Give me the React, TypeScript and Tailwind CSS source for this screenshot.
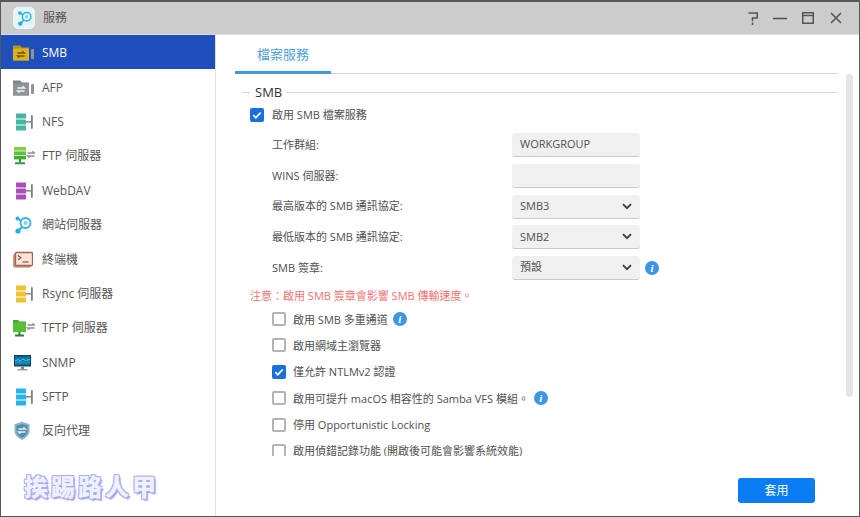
import { ReactNode } from "react";

const Connector = ({ x = 24 }: { x?: number }) => (
  <g>
    <rect x={x - 5} y="9" width="5" height="1.6" fill="#8a8f92" />
    <rect x={x} y="3" width="1.8" height="14" rx="0.9" fill="#7d8285" />
  </g>
);

const Stack = ({ color }: { color: string }) => (
  <svg width="22" height="20" viewBox="0 0 22 20">
    <rect x="3" y="1.5" width="10" height="5" rx="0.6" fill={color} />
    <rect x="3" y="7.5" width="10" height="5" rx="0.6" fill={color} />
    <rect x="3" y="13.5" width="10" height="5" rx="0.6" fill={color} />
    <Connector x={18} />
  </svg>
);

const Arrows = ({ x, y, c }: { x: number; y: number; c: string }) => (
  <g stroke={c} strokeWidth="1.3" fill="none">
    <path d={`M${x} ${y}h7l-2-1.8`} />
    <path d={`M${x + 7} ${y + 3}h-7l2 1.8`} />
  </g>
);

const FolderIcon = ({ body, tab, arrow }: { body: string; tab: string; arrow: string }) => (
  <svg width="22" height="20" viewBox="0 0 22 20">
    <path d="M0 2.5h7l2 2h7v13H0z" fill={tab} />
    <rect x="0" y="5.5" width="16" height="12" fill={body} />
    <Arrows x={4.5} y={10} c={arrow} />
    <rect x="18" y="6" width="3" height="10" rx="1" fill="#8f9496" />
  </svg>
);

const NetIcon = ({ size = 20 }: { size?: number }) => (
  <svg width={size} height={size} viewBox="0 0 20 20" fill="none">
    <circle cx="12.5" cy="8" r="5" stroke="#2bb3e6" strokeWidth="1.8" />
    <circle cx="12.5" cy="8" r="2" fill="#7fd3ef" />
    <circle cx="4.5" cy="3.5" r="2" fill="#25ade2" />
    <circle cx="5" cy="16" r="2.6" fill="#25ade2" />
    <path d="M5.5 4.5l3 1.2M6.5 14.5l3-2.8" stroke="#25ade2" strokeWidth="1.8" />
  </svg>
);

const TerminalIcon = () => (
  <svg width="20" height="20" viewBox="0 0 20 20">
    <rect x="0.8" y="4" width="17" height="13" rx="1" fill="#d7a692" stroke="#b0705a" />
    <rect x="2.5" y="2.5" width="17" height="13" rx="1" fill="#fbe4d8" stroke="#a9604a" strokeWidth="1.3" />
    <path d="M5 5.5l3 2.2-3 2.2" stroke="#8c4c39" fill="none" strokeWidth="1.1" />
    <path d="M9.5 12h6" stroke="#8c4c39" strokeWidth="1.2" />
  </svg>
);

const FtpIcon = () => (
  <svg width="22" height="20" viewBox="0 0 22 20">
    <rect x="1" y="1" width="12" height="3.6" fill="#7ed04b" />
    <rect x="1" y="5.4" width="12" height="3.6" fill="#5cc13a" />
    <rect x="1" y="9.8" width="12" height="3.6" fill="#3eaf2e" />
    <path d="M7 13v3M2 17.2h10" stroke="#2b9a3a" strokeWidth="2" />
    <Arrows x={14.5} y={7} c="#8d9193" />
  </svg>
);

const TftpIcon = () => (
  <svg width="22" height="20" viewBox="0 0 22 20">
    <path d="M0 2h5l1.5 1.5H13V14H0z" fill="#47a72f" />
    <rect x="0" y="4.5" width="13" height="9.5" fill="#59bf35" />
    <path d="M6.5 14v2.5M2 17.5h9" stroke="#26862f" strokeWidth="2" />
    <Arrows x={14.5} y={7} c="#8d9193" />
  </svg>
);

const SnmpIcon = () => (
  <svg width="20" height="20" viewBox="0 0 20 20">
    <rect x="1" y="2" width="17" height="11.5" fill="#15435f" />
    <rect x="2" y="3.5" width="15" height="8.5" fill="#0d76a8" />
    <path d="M2 8l3-1.5 2 1.5 3-2 2.5 1.5L17 6.5" stroke="#5fd0ea" fill="none" strokeWidth="0.9" />
    <path d="M2 10l3-1 2 1 3-1 3 1 4-1" stroke="#3ab2d8" fill="none" strokeWidth="0.7" />
    <rect x="8" y="13.5" width="3" height="2.5" fill="#7b8286" />
    <rect x="4.5" y="16" width="10" height="1.5" fill="#9ba1a4" />
  </svg>
);

const ShieldIcon = () => (
  <svg width="20" height="20" viewBox="0 0 20 20">
    <path d="M9 0.8l7.5 2.4V10c0 4-3.5 7-7.5 9C5 17 1.5 14 1.5 10V3.2z" fill="#8fb3c4" />
    <path d="M9 3l5.5 1.7V10c0 3-2.6 5.2-5.5 6.7C6.1 15.2 3.5 13 3.5 10V4.7z" fill="#4f8eae" />
    <Arrows x={5.5} y={8} c="#e8f2f6" />
  </svg>
);

const menu: { label: string; icon: ReactNode }[] = [
  { label: "SMB", icon: <FolderIcon body="#d9b31c" tab="#b8951a" arrow="#7a4f10" /> },
  { label: "AFP", icon: <FolderIcon body="#8d9599" tab="#7c8488" arrow="#f1f3f4" /> },
  { label: "NFS", icon: <Stack color="#45b5a4" /> },
  { label: "FTP 伺服器", icon: <FtpIcon /> },
  { label: "WebDAV", icon: <Stack color="#a94fb8" /> },
  { label: "網站伺服器", icon: <NetIcon /> },
  { label: "終端機", icon: <TerminalIcon /> },
  { label: "Rsync 伺服器", icon: <Stack color="#f0c232" /> },
  { label: "TFTP 伺服器", icon: <TftpIcon /> },
  { label: "SNMP", icon: <SnmpIcon /> },
  { label: "SFTP", icon: <Stack color="#25b4ec" /> },
  { label: "反向代理", icon: <ShieldIcon /> },
];

const InfoIcon = () => (
  <span className="flex h-[14px] w-[14px] items-center justify-center rounded-full bg-[#3d96e3] font-['Liberation_Serif',serif] text-[11px] font-bold italic leading-none text-white">
    i
  </span>
);

const Check = ({ on }: { on?: boolean }) =>
  on ? (
    <span className="flex h-[14px] w-[14px] shrink-0 items-center justify-center rounded-[2px] bg-[#1a6fe0]">
      <svg width="10" height="10" viewBox="0 0 10 10" fill="none">
        <path d="M1.3 5.2l2.5 2.5 4.9-5.2" stroke="#fff" strokeWidth="1.7" />
      </svg>
    </span>
  ) : (
    <span className="h-[14px] w-[14px] shrink-0 rounded-[2px] border-2 border-[#b4b4b4] bg-white" />
  );

const Chevron = () => (
  <svg width="10" height="7" viewBox="0 0 10 7" fill="none">
    <path d="M1 1.2l4 4 4-4" stroke="#3c3c3c" strokeWidth="1.8" />
  </svg>
);

const Field = ({ label, value, select, info }: { label: string; value?: string; select?: boolean; info?: boolean }) => (
  <div className="flex h-[24px] items-center">
    <span className="w-[262px] pl-[22px]">{label}</span>
    <div className="flex h-[24px] w-[128px] items-center justify-between rounded-[3px] border-b border-[#c9c9c9] bg-[#f0f0f0] pl-[8px] pr-[8px]">
      <span>{value}</span>
      {select && <Chevron />}
    </div>
    {info && (
      <span className="ml-[5px]">
        <InfoIcon />
      </span>
    )}
  </div>
);

const Option = ({ label, on, info }: { label: string; on?: boolean; info?: boolean }) => (
  <div className="flex h-[14px] items-center pl-[22px]">
    <Check on={on} />
    <span className="ml-[7px] whitespace-nowrap leading-[11px]">{label}</span>
    {info && (
      <span className="ml-[5px]">
        <InfoIcon />
      </span>
    )}
  </div>
);

export default function App() {
  return (
    <div className="relative flex h-[517px] w-[860px] flex-col overflow-hidden border-x border-b border-t-2 border-[#55585a] bg-white font-['Open_Sans','Noto_Sans_CJK_TC',sans-serif] text-[11px] text-[#505050]">
      <div className="flex h-[33px] shrink-0 items-center border-b border-[#dcdcdc] bg-[#cbcccb] pl-[12px] pr-[17px]">
        <span className="flex h-[22px] w-[22px] items-center justify-center rounded-[5px] bg-[#e4f6f8]">
          <NetIcon size={17} />
        </span>
        <span className="ml-[8px] text-[12px] text-[#555]">服務</span>
        <div className="ml-auto flex items-center">
          <svg width="10" height="13" viewBox="0 0 10 13" fill="none" stroke="#555" strokeWidth="1.5">
            <path d="M0.5 1h8.7v5H4.5v3.2M4.5 10.5V13" />
          </svg>
          <svg className="ml-[15px]" width="14" height="13" viewBox="0 0 14 13" fill="none" stroke="#555" strokeWidth="1.6">
            <path d="M0 6.5h14" />
          </svg>
          <svg className="ml-[15px]" width="12" height="12" viewBox="0 0 12 12" fill="none" stroke="#555" strokeWidth="1.5">
            <path d="M0.75 0.75h10.5v10.5H0.75zM0.75 3.5h10.5" />
          </svg>
          <svg className="ml-[16px]" width="12" height="12" viewBox="0 0 12 12" fill="none" stroke="#555" strokeWidth="1.6">
            <path d="M1 1l10 10M11 1L1 11" />
          </svg>
        </div>
      </div>

      <div className="flex min-h-0 flex-1">
        <nav className="w-[215px] shrink-0 border-r border-[#e2e2e2]">
          {menu.map((m, i) => (
            <div
              key={m.label}
              className={
                i === 0
                  ? "flex h-[34.4px] items-center bg-[#1f4fbd] pl-[12px] pt-[2px] text-[12px] text-white"
                  : "flex h-[34.4px] items-center pl-[12px] pt-[2px] text-[12px] text-[#555]"
              }
            >
              <span className="flex w-[29px] shrink-0">{m.icon}</span>
              {m.label}
            </div>
          ))}
        </nav>

        <main className="flex min-w-0 flex-1 flex-col pl-[19px]">
          <div className="mr-[21px] flex h-[39px] shrink-0 border-b border-[#d6d6d6]">
            <div className="flex h-[39px] w-[96px] items-center justify-center border-b-[3px] border-[#3f97dc] pt-[3px] text-[13px] text-[#4f9fdc]">
              檔案服務
            </div>
          </div>

          <div className="flex min-h-0 flex-1">
            <div className="h-[382px] w-[602px] shrink-0 overflow-hidden pl-[7px]">
              <div className="mt-[10px] flex items-center">
                <span className="h-px w-[8px] bg-[#d6d6d6]" />
                <span className="mx-[5px] text-[13px] font-medium leading-[16px] text-[#333]">SMB</span>
                <span className="h-px flex-1 bg-[#d6d6d6]" />
              </div>
              <div className="mt-[8px] flex h-[14px] items-center pl-[8px]">
                <Check on />
                <span className="ml-[8px]">啟用 SMB 檔案服務</span>
              </div>
              <div className="mt-[11px] flex flex-col gap-[6.75px] pl-[8px]">
                <Field label="工作群組:" value="WORKGROUP" />
                <Field label="WINS 伺服器:" />
                <Field label="最高版本的 SMB 通訊協定:" value="SMB3" select />
                <Field label="最低版本的 SMB 通訊協定:" value="SMB2" select />
                <Field label="SMB 簽章:" value="預設" select info />
              </div>
              <p className="mt-[8px] pl-[8px] leading-[16px] text-[#f2726e]">注意：啟用 SMB 簽章會影響 SMB 傳輸速度。</p>
              <div className="mt-[8px] flex flex-col gap-[12.4px] pl-[8px]">
                <Option label="啟用 SMB 多重通道" info />
                <Option label="啟用網域主瀏覽器" />
                <Option label="僅允許 NTLMv2 認證" on />
                <Option label="啟用可提升 macOS 相容性的 Samba VFS 模組。" info />
                <Option label="停用 Opportunistic Locking" />
                <Option label="啟用偵錯記錄功能 (開啟後可能會影響系統效能)" />
              </div>
            </div>
            <div className="ml-[9px] h-[323px] w-[7px] rounded-full bg-[#e5e5e5]" />
          </div>

          <div className="flex h-[38px] shrink-0 justify-end pr-[44px]">
            <button className="h-[25px] w-[77px] rounded-[3px] bg-[#0a7df5] text-[12px] text-white">套用</button>
          </div>
        </main>
      </div>

      <div className="absolute left-[23px] top-[472px] font-['Noto_Sans_CJK_TC',sans-serif] text-[24px] font-black leading-none tracking-[3px] text-[#eef0ff] [text-shadow:1px_1px_0_#a9aef0,-1px_-1px_0_#a9aef0,1px_-1px_0_#a9aef0,-1px_1px_0_#a9aef0,2px_2px_1px_#9ea3e8]">
        挨踢路人甲
      </div>
    </div>
  );
}
